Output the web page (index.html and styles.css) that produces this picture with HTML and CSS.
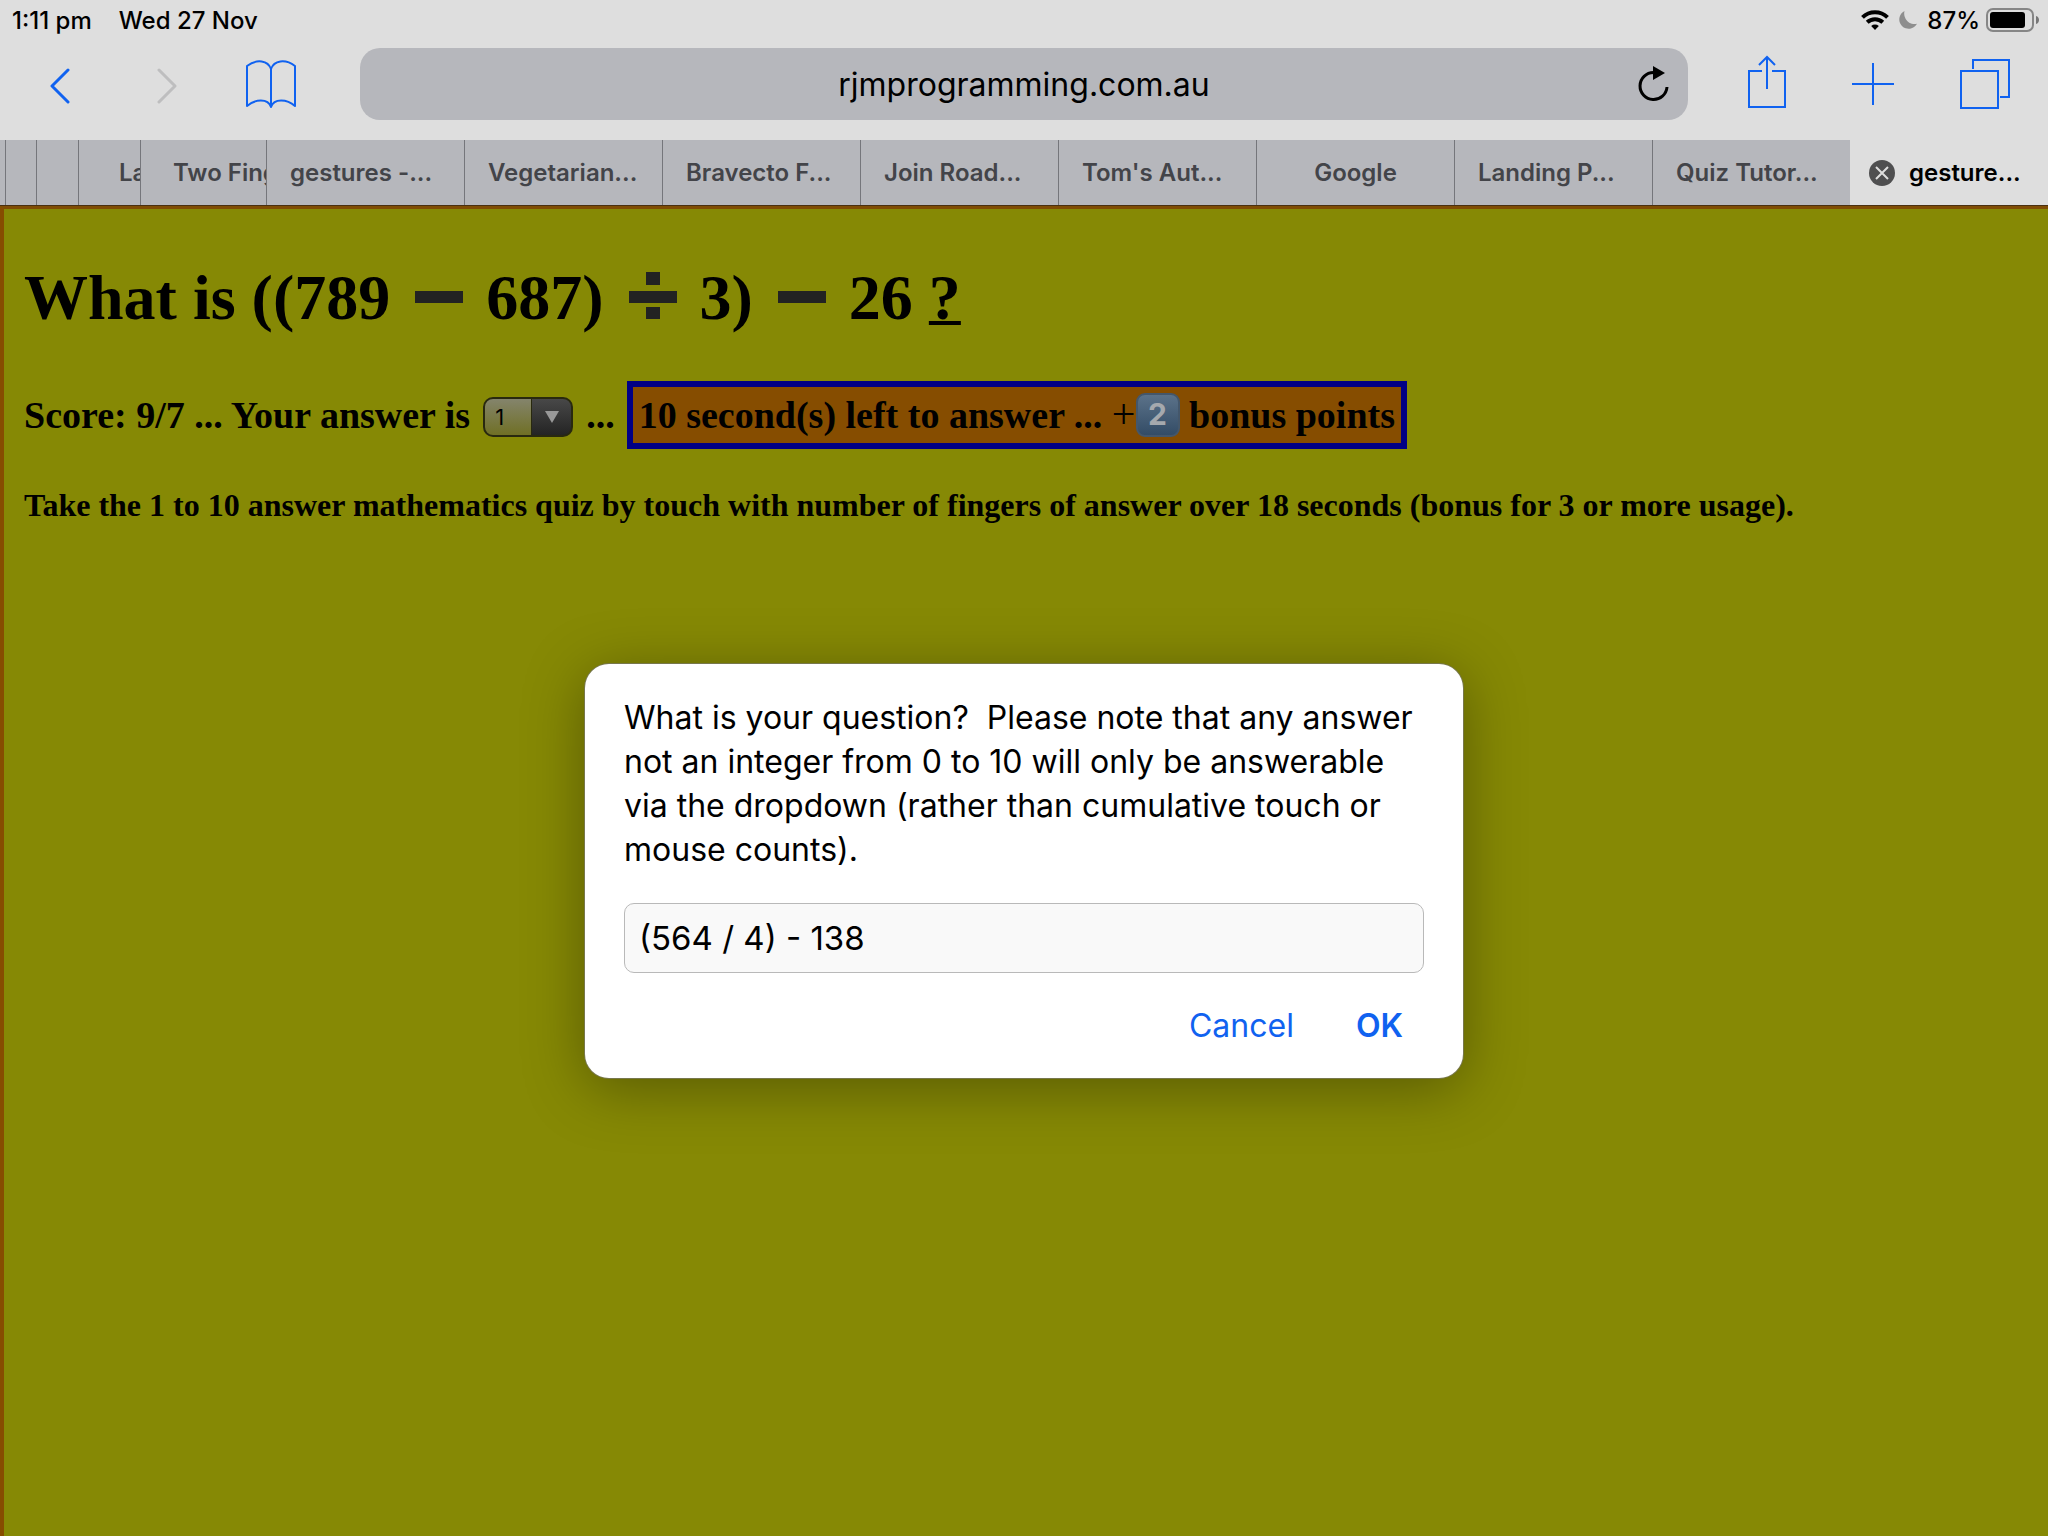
FILE: index.html
```html
<!DOCTYPE html>
<html lang="en">
<head>
<meta charset="utf-8">
<meta name="viewport" content="width=device-width, initial-scale=1">
<title>gestures - maths quiz</title>
<link rel="stylesheet" href="styles.css">
</head>
<body>
<header class="chrome">
  <div class="status">
    <span>1:11 pm</span>
    <span class="status-date">Wed 27 Nov</span>
    <span class="status-right">
      <svg width="28" height="20" viewBox="0 0 28 20" fill="none" stroke="#000" stroke-width="4" aria-label="Wi-Fi"><path d="M1.5 7.4a18 18 0 0 1 25 0"/><path d="M6.2 12.3a11.3 11.3 0 0 1 15.6 0"/><path d="M14 20l-3.8-4a5.6 5.6 0 0 1 7.600 0z" fill="#000" stroke="none"/></svg>
      <svg width="18" height="18" viewBox="0 0 18 18" aria-label="Do not disturb"><path d="M5.500 0A9.400 9.400 0 1 0 18 12.800A10.500 10.500 0 0 1 5.500 0z" fill="#8e8e8e"/></svg>
      <span class="battery-level">87%</span>
      <svg width="54" height="24" viewBox="0 0 54 24" aria-label="Battery"><rect x="1" y="1" width="46" height="22" rx="6" fill="none" stroke="#868686" stroke-width="2"/><rect x="4" y="4" width="35" height="16" rx="3" fill="#000"/><path d="M50 8c4 1 4 7 0 8z" fill="#777"/></svg>
    </span>
  </div>
  <nav class="toolbar">
    <div class="tools tools-left">
      <button class="tool" aria-label="Back"><svg width="20" height="40" viewBox="0 -4 20 40" fill="none" stroke="#1062f0" stroke-width="3" stroke-linecap="round" stroke-linejoin="round"><path d="M18 2L2 18l16 16"/></svg></button>
      <button class="tool" aria-label="Forward" disabled><svg width="20" height="40" viewBox="0 -4 20 40" fill="none" stroke="#bebebf" stroke-width="3" stroke-linecap="round" stroke-linejoin="round"><path d="M2 2l16 16L2 34"/></svg></button>
      <button class="tool" aria-label="Bookmarks"><svg width="50" height="48" viewBox="0 0 50 48" fill="none" stroke="#1062f0" stroke-width="2" stroke-linejoin="round"><path d="M25 9v38M25 9C22 .5 11-1.500 1 6v40c8-7 21-8 24 1C28 38 41 39 49 46V6C39-1.500 28 .5 25 9z"/></svg></button>
    </div>
    <div class="address">
      <input class="address-input" type="text" aria-label="Address" value="rjmprogramming.com.au">
      <button class="tool reload" aria-label="Reload"><svg width="32" height="36" viewBox="0 0 32 36"><path d="M15.500 6.500A13.500 13.500 0 1 0 29 21" fill="none" stroke="#000" stroke-width="3"/><path d="M15 0v14l12-7z" fill="#000"/></svg></button>
    </div>
    <div class="tools tools-right">
      <button class="tool" aria-label="Share"><svg width="38" height="58" viewBox="0 0 38 58" fill="none" stroke="#1062f0" stroke-width="2"><path d="M14 16H1v36h36V16H24M19 34V2M11 10l8-8 8 8"/></svg></button>
      <button class="tool" aria-label="New tab"><svg width="42" height="42" viewBox="0 0 42 42" stroke="#1062f0" stroke-width="2"><path d="M0 21h42M21 0v42"/></svg></button>
      <button class="tool" aria-label="All tabs"><svg width="50" height="50" viewBox="0 0 50 50" fill="none" stroke="#1062f0" stroke-width="2"><path d="M1 12h37v37H1zM13 10V1h36v37h-9"/></svg></button>
    </div>
  </nav>
  <nav class="tabs" aria-label="Tabs">
    <a class="tab" href="#"></a>
    <a class="tab" href="#"></a>
    <a class="tab" href="#"></a>
    <a class="tab tab-stacked" href="#">La</a>
    <a class="tab tab-stacked-wide" href="#">Two Fing</a>
    <a class="tab" href="#">gestures -...</a>
    <a class="tab" href="#">Vegetarian...</a>
    <a class="tab" href="#">Bravecto F...</a>
    <a class="tab" href="#">Join Road...</a>
    <a class="tab" href="#">Tom's Aut...</a>
    <a class="tab tab-short" href="#">Google</a>
    <a class="tab" href="#">Landing P...</a>
    <a class="tab" href="#">Quiz Tutor...</a>
    <div class="tab tab-active">
      <button class="tool" aria-label="Close tab"><svg width="26" height="26" viewBox="0 0 26 26"><circle cx="13" cy="13" r="13" fill="#4f4f50"/><path d="M7 7l12 12M19 7L7 19" stroke="#dedede" stroke-width="2"/></svg></button>
      <span>gesture...</span>
    </div>
  </nav>
</header>

<main class="page">
  <h1 class="question">What is ((789 <svg class="op" viewBox="0 0 64 48" role="img" aria-label="minus"><path d="M9 20h48v12H9z"/></svg> 687) <svg class="op" viewBox="0 0 64 48" role="img" aria-label="divided by"><path d="M9 20h48v12H9zM26 1h14v13H26zM26 36h14v12H26z"/></svg> 3) <svg class="op" viewBox="0 0 64 48" role="img" aria-label="minus"><path d="M9 20h48v12H9z"/></svg> 26 <u>?</u></h1>
  <h3 class="score">
    <label for="answer">Score: 9/7 ... Your answer is</label>
    <span class="picker">
      <select id="answer" class="picker-select"><option>1</option><option>2</option><option>3</option><option>4</option><option>5</option></select>
      <svg class="picker-arrow" width="14" height="12" viewBox="0 0 14 12"><path d="M0 0h14L7 12z" fill="#999"/></svg>
    </span>
    <span>...</span>
    <span class="timer">10 second(s) left to answer ... <span class="plus">+</span><span class="keycap">2</span> bonus points</span>
  </h3>
  <h4 class="hint">Take the 1 to 10 answer mathematics quiz by touch with number of fingers of answer over 18 seconds (bonus for 3 or more usage).</h4>

  <div class="overlay">
    <form class="prompt" role="dialog" aria-modal="true">
      <label class="prompt-text" for="prompt-input">What is your question?&nbsp; Please note that any answer not an integer from 0 to 10 will only be answerable via the dropdown (rather than cumulative touch or mouse counts).</label>
      <input class="prompt-input" id="prompt-input" type="text" value="(564 / 4) - 138">
      <div class="prompt-actions">
        <button class="action" type="button">Cancel</button>
        <button class="action action-main" type="submit">OK</button>
      </div>
    </form>
  </div>
</main>
</body>
</html>
```
FILE: styles.css
```css
* { box-sizing: border-box; }

body {
  margin: 0;
  min-height: 100vh;
  display: flex;
  flex-direction: column;
  font-family: Inter, "Liberation Sans", sans-serif;
  color: #000;
  background: #868905;
}

button, input, select { font-family: inherit; color: inherit; }
svg { display: block; flex: none; }

/* Browser chrome */
.chrome { background: #dedede; }

.status {
  display: flex;
  align-items: center;
  height: 40px;
  padding: 0 8px 0 12px;
  font-size: 24px;
  font-weight: 500;
}
.status-date { margin-left: 27px; }
.status-right {
  display: flex;
  align-items: center;
  gap: 10px;
  margin-left: auto;
}
.battery-level { margin-right: -4px; }

.toolbar {
  display: grid;
  grid-template-columns: 360px 1fr 360px;
  height: 100px;
  padding: 8px 0 20px;
}
.tool {
  display: block;
  padding: 0;
  border: 0;
  background: none;
}
.tools {
  display: flex;
  align-items: center;
}
.tools-left { gap: 87px; padding-left: 50px; }
.tools-left .tool:last-child { margin-left: -18px; }
.tools-right { gap: 66px; padding-left: 60px; }

.address {
  display: grid;
  grid-template-columns: 1fr;
  align-items: center;
  background: #b6b7bc;
  border-radius: 20px;
}
.address-input {
  grid-area: 1 / 1;
  width: 100%;
  height: 72px;
  border: 0;
  background: none;
  font-size: 32px;
  text-align: center;
}
.reload {
  grid-area: 1 / 1;
  justify-self: end;
  margin-right: 18px;
}

.tabs {
  display: grid;
  grid-template-columns: 5px 31px 42px 62px 126px repeat(9, 1fr);
  height: 66px;
  border-bottom: 1px solid #4a3010;
  background: #b6b7bc;
}
.tab {
  display: flex;
  align-items: center;
  min-width: 0;
  overflow: hidden;
  padding-left: 23px;
  border-left: 1px solid #75767b;
  white-space: nowrap;
  font-size: 24px;
  font-weight: 600;
  color: #434449;
  text-decoration: none;
}
.tab:first-child { border-left: 0; }
.tab:empty { padding: 0; }
.tab-stacked { padding-left: 40px; }
.tab-stacked-wide { padding-left: 32px; }
.tab-short { justify-content: center; padding: 0; }
.tab-active {
  gap: 14px;
  padding-left: 19px;
  border-left: 0;
  background: #dedede;
  color: #000;
}

/* Quiz page */
.page {
  position: relative;
  display: grid;
  grid-template-columns: 1fr;
  grid-template-rows: auto auto 1fr;
  flex: 1;
  padding: 53px 20px 0;
  border-top: 3px solid #804d04;
  border-left: 4px solid #864d00;
  font-family: "Liberation Serif", serif;
}
.question {
  margin: 0 0 47px;
  font-size: 64px;
  line-height: 72px;
}
.question u {
  text-decoration-thickness: 4px;
}
.op {
  display: inline-block;
  width: 64px;
  height: 48px;
  fill: #222;
}
.score {
  display: flex;
  align-items: center;
  gap: 12px;
  margin: 0 0 38px;
  font-size: 38px;
  line-height: 44px;
}
.timer {
  padding: 6px;
  border: 6px solid #000085;
  background: #864d00;
}
.plus {
  font-size: 42px;
  font-weight: 400;
  line-height: 40px;
}
.keycap {
  display: inline-block;
  width: 44px;
  height: 44px;
  border: 2px solid #44576b;
  border-radius: 9px;
  background: linear-gradient(#5b7289, #334c66);
  color: #a5a9ae;
  font-family: Inter, sans-serif;
  font-size: 30px;
  line-height: 38px;
  text-align: center;
  vertical-align: top;
}
.picker {
  display: grid;
  align-items: center;
  margin: 4px 1px 0;
}
.picker-select {
  grid-area: 1 / 1;
  appearance: none;
  width: 90px;
  height: 40px;
  padding: 0 10px;
  border: 2px solid #29290f;
  border-radius: 10px;
  background:
    linear-gradient(90deg, #29290f, #29290f) 46px 0 / 1px 100% no-repeat,
    linear-gradient(#484848, #242424) 47px 0 / 100% 100% no-repeat,
    linear-gradient(#84846c, #707025);
  font-family: Inter, sans-serif;
  font-size: 22px;
}
.picker-arrow {
  grid-area: 1 / 1;
  justify-self: end;
  margin-right: 14px;
  pointer-events: none;
}
.hint {
  margin: 0;
  font-size: 32px;
  line-height: 36px;
}

/* Modal prompt laid over the page */
.overlay {
  position: absolute;
  inset: 0;
  display: grid;
  place-items: center;
  padding: 0 4px 4px 0;
  font-family: Inter, "Liberation Sans", sans-serif;
}
.prompt {
  display: flex;
  flex-direction: column;
  width: 878px;
  max-width: 90%;
  padding: 32px 39px 30px;
  border-radius: 24px;
  background: #fff;
  box-shadow: 0 0 0 1px #77774c, 0 10px 60px rgba(0, 0, 0, 0.35);
}
.prompt-text {
  font-size: 32px;
  line-height: 44px;
}
.prompt-input {
  height: 70px;
  margin-top: 31px;
  padding: 0 14px;
  border: 1px solid #b9b9b9;
  border-radius: 10px;
  background: #f9f9f9;
  font-size: 33px;
}
.prompt-actions {
  display: flex;
  justify-content: flex-end;
  gap: 62px;
  margin-top: 31px;
  padding-right: 21px;
}
.action {
  padding: 0;
  border: 0;
  background: none;
  color: #1062f0;
  font-size: 32px;
  line-height: 44px;
}
.action-main { font-weight: 600; }
```
